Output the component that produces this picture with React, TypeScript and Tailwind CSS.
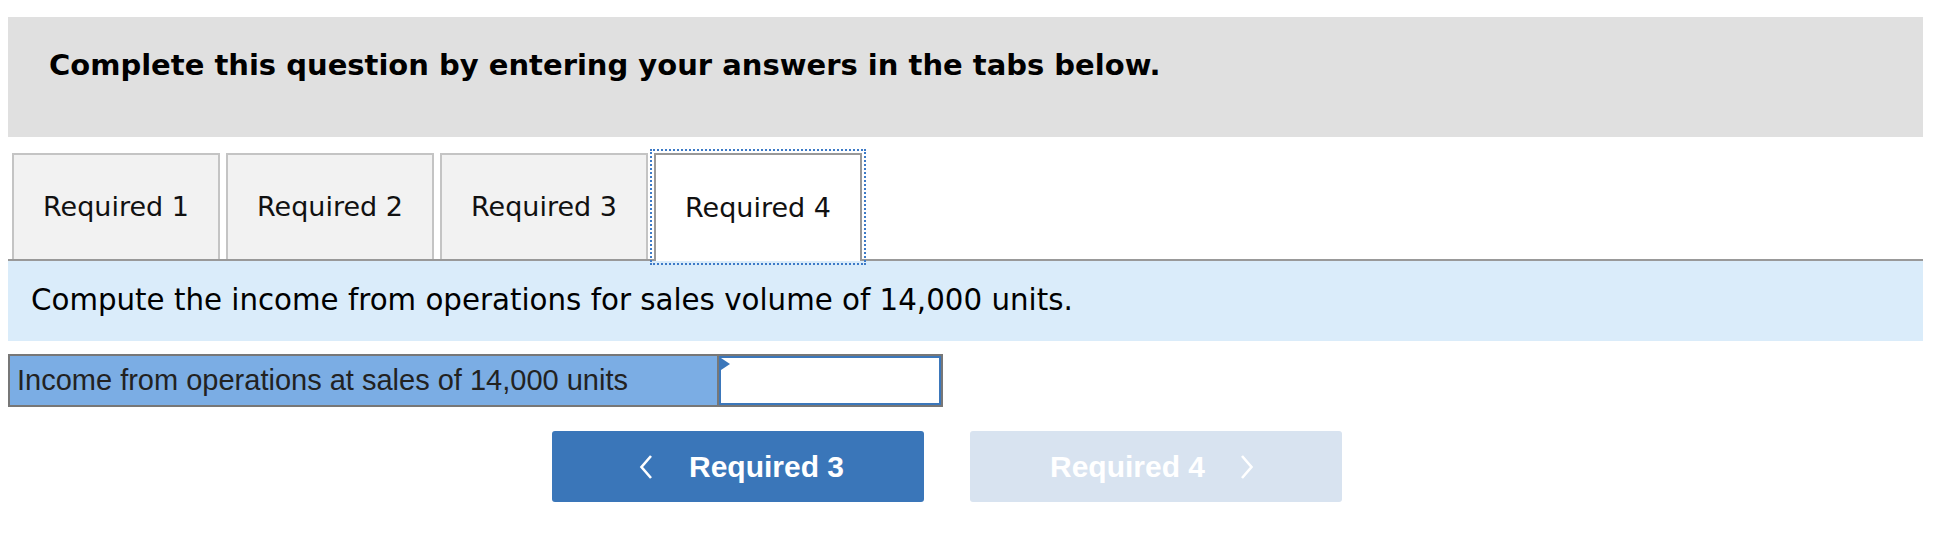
import React from "react";

const verdana = { fontFamily: '"DejaVu Sans", Verdana, sans-serif' };

function Chevron({ dir }: { dir: "left" | "right" }) {
  return (
    <svg width="14" height="26" viewBox="0 0 14 26" className="shrink-0">
      <polyline
        points={dir === "left" ? "12,2 2.5,13 12,24" : "2,2 11.5,13 2,24"}
        fill="none"
        stroke="white"
        strokeWidth="2.6"
        strokeLinejoin="miter"
      />
    </svg>
  );
}

export default function App() {
  const tabs = ["Required 1", "Required 2", "Required 3"];
  return (
    <div className="w-[1941px] h-[544px] bg-white pt-[17px] pl-[8px] pr-[18px]" style={verdana}>
      <div className="h-[120px] bg-[#e0e0e0] pl-[41px] pt-[34px]">
        <h1 className="text-[29px] leading-[29px] font-bold text-black whitespace-nowrap">
          Complete this question by entering your answers in the tabs below.
        </h1>
      </div>

      <div className="mt-[16px] flex items-end gap-[6px] pl-[4px] border-b-2 border-[#999999]">
        {tabs.map((t) => (
          <div
            key={t}
            className="w-[208px] h-[106px] border-2 border-b-0 border-[#c4c4c4] bg-[#f2f2f2] flex items-center justify-center text-[27px] text-[#111]"
          >
            {t}
          </div>
        ))}
        <div className="w-[208px] h-[108px] -mb-[2px] border-2 border-b-0 border-[#999999] bg-white flex items-center justify-center text-[27px] text-[#111] outline-2 outline-dotted outline-[#3d7ac6] outline-offset-2">
          Required 4
        </div>
      </div>

      <div className="h-[80px] bg-[#daecfa] flex items-center pl-[23px] text-[29.3px] text-black whitespace-nowrap">
        Compute the income from operations for sales volume of 14,000 units.
      </div>

      <div className="mt-[13px] w-[935px] h-[53px] flex border-2 border-[#777777]">
        <div className="w-[709px] bg-[#7badE4] border-r-2 border-[#777777] flex items-center pl-[7px] font-['Liberation_Sans',Arial,sans-serif] text-[29px] text-[#222] whitespace-nowrap">
          Income from operations at sales of 14,000 units
        </div>
        <div className="relative flex-1 bg-white border-2 border-[#3b77bb]">
          <div className="absolute left-0 top-0 w-0 h-0 border-y-[6px] border-y-transparent border-l-[9px] border-l-[#3b77bb]" />
          <input className="w-full h-full outline-none bg-white" aria-label="answer" />
        </div>
      </div>

      <div className="mt-[24px] pl-[544px] flex gap-[46px] font-['Liberation_Sans',Arial,sans-serif]">
        <button className="w-[372px] h-[71px] rounded-[3px] bg-[#3a76b9] text-white flex items-center justify-center gap-[36px] pl-[7px]">
          <Chevron dir="left" />
          <span className="text-[30px] font-bold leading-none whitespace-nowrap">Required 3</span>
        </button>
        <button className="w-[372px] h-[71px] rounded-[3px] bg-[#d8e3f0] text-white flex items-center justify-center gap-[35px] pr-[8px]">
          <span className="text-[30px] font-bold leading-none whitespace-nowrap">Required 4</span>
          <Chevron dir="right" />
        </button>
      </div>
    </div>
  );
}
